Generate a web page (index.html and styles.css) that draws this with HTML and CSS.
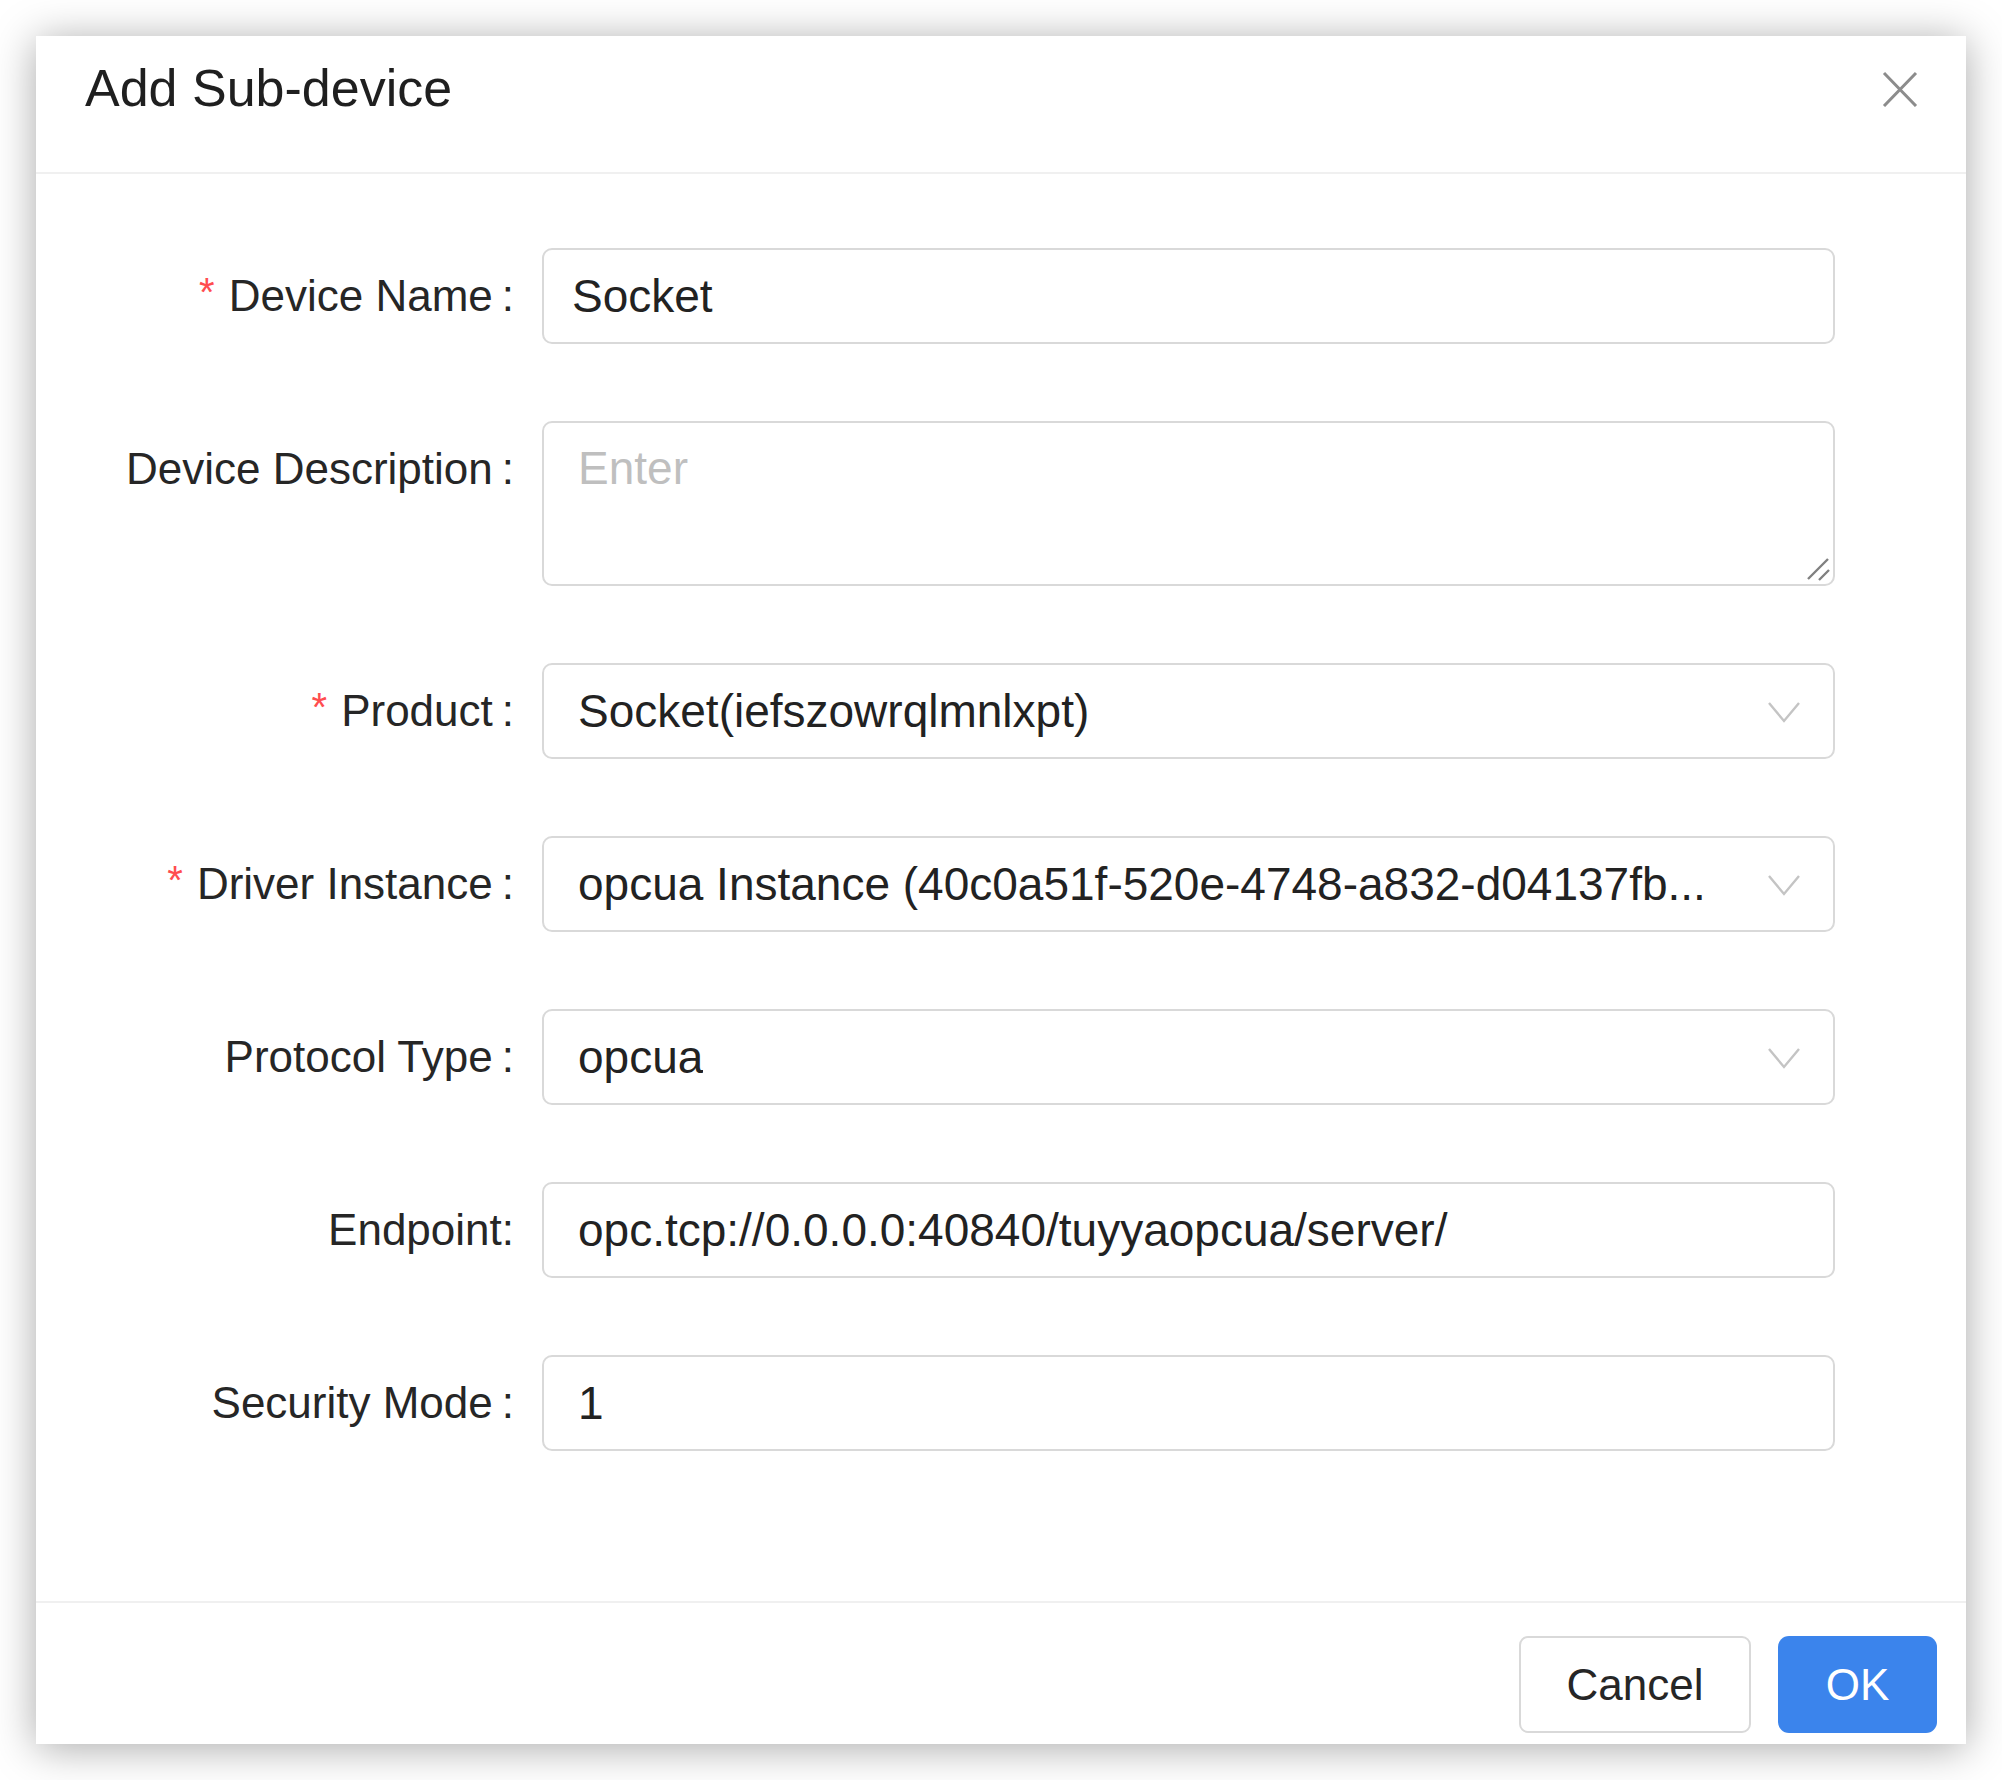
FILE: index.html
```html
<!DOCTYPE html>
<html lang="en">
<head>
<meta charset="utf-8">
<title>Add Sub-device</title>
<link rel="stylesheet" href="styles.css">
</head>
<body>
<div class="modal">
  <div class="modal-header">
    <div class="modal-title">Add Sub-device</div>
    <button class="modal-close" type="button" aria-label="Close">
      <svg viewBox="0 0 36 36" width="36" height="36"><path d="M2 2 L34 35 M34 2 L2 35" stroke="#8c8c8c" stroke-width="3" fill="none"/></svg>
    </button>
  </div>
  <form class="modal-body">
    <div class="form-row">
      <label class="form-label"><span class="req">*</span>Device Name<span class="colon">:</span></label>
      <div class="control"><input class="field field-first" type="text" value="Socket"></div>
    </div>
    <div class="form-row">
      <label class="form-label">Device Description<span class="colon">:</span></label>
      <div class="control textarea-wrap">
        <textarea class="field field-area" placeholder="Enter"></textarea>
        <svg class="resizer" viewBox="0 0 24 24" width="24" height="24"><path d="M2 22 L22 2 M13 23 L23 13" stroke="#808080" stroke-width="2.4" fill="none"/></svg>
      </div>
    </div>
    <div class="form-row">
      <label class="form-label"><span class="req">*</span>Product<span class="colon">:</span></label>
      <div class="control">
        <div class="field select"><span class="select-value">Socket(iefszowrqlmnlxpt)</span>
          <svg class="chevron" viewBox="0 0 32 22" width="32" height="22"><path d="M1 2 L16 20 L31 2" stroke="#c4c4c4" stroke-width="2.4" fill="none"/></svg>
        </div>
      </div>
    </div>
    <div class="form-row">
      <label class="form-label"><span class="req">*</span>Driver Instance<span class="colon">:</span></label>
      <div class="control">
        <div class="field select"><span class="select-value">opcua Instance (40c0a51f-520e-4748-a832-d04137fb...</span>
          <svg class="chevron" viewBox="0 0 32 22" width="32" height="22"><path d="M1 2 L16 20 L31 2" stroke="#c4c4c4" stroke-width="2.4" fill="none"/></svg>
        </div>
      </div>
    </div>
    <div class="form-row">
      <label class="form-label">Protocol Type<span class="colon">:</span></label>
      <div class="control">
        <div class="field select"><span class="select-value">opcua</span>
          <svg class="chevron" viewBox="0 0 32 22" width="32" height="22"><path d="M1 2 L16 20 L31 2" stroke="#c4c4c4" stroke-width="2.4" fill="none"/></svg>
        </div>
      </div>
    </div>
    <div class="form-row">
      <label class="form-label">Endpoint:</label>
      <div class="control"><input class="field" type="text" value="opc.tcp://0.0.0.0:40840/tuyyaopcua/server/"></div>
    </div>
    <div class="form-row">
      <label class="form-label">Security Mode<span class="colon">:</span></label>
      <div class="control"><input class="field" type="text" value="1"></div>
    </div>
  </form>
  <div class="modal-footer">
    <button class="btn btn-default" type="button">Cancel</button>
    <button class="btn btn-primary" type="button">OK</button>
  </div>
</div>
</body>
</html>
```

FILE: styles.css
```css
* { box-sizing: border-box; }

html, body {
  margin: 0;
  padding: 0;
  background: #ffffff;
}

body {
  font-family: "Liberation Sans", Arial, sans-serif;
  color: #262626;
  width: 2002px;
  height: 1780px;
  overflow: hidden;
}

.modal {
  margin: 36px 0 0 36px;
  width: 1930px;
  height: 1708px;
  background: #ffffff;
  box-shadow: 0 4px 40px rgba(0, 0, 0, 0.34);
  display: flex;
  flex-direction: column;
}

.modal-header {
  height: 138px;
  border-bottom: 2px solid #f0f0f0;
  display: flex;
  justify-content: space-between;
  align-items: flex-start;
  padding: 22px 48px 0 49px;
}

.modal-title {
  font-size: 52px;
  line-height: 60px;
  color: #1f1f1f;
}

.modal-close {
  margin-top: 13px;
  padding: 0;
  border: 0;
  background: transparent;
  width: 36px;
  height: 37px;
  display: flex;
}

.modal-body {
  flex: 1;
  margin: 0;
  padding-top: 74px;
  display: flex;
  flex-direction: column;
  gap: 77px;
}

.form-row {
  display: grid;
  grid-template-columns: 506px 1293px;
  align-items: start;
}

.form-label {
  height: 96px;
  display: flex;
  align-items: center;
  justify-content: flex-end;
  padding-right: 28px;
  font-size: 44px;
  color: #262626;
  white-space: nowrap;
}

.req {
  color: #ff4d4f;
  font-size: 40px;
  margin-right: 14px;
  align-self: center;
  position: relative;
  top: -4px;
}

.colon {
  margin-left: 9px;
}

.control {
  position: relative;
}

.field {
  display: block;
  width: 100%;
  height: 96px;
  margin: 0;
  border: 2px solid #d9d9d9;
  border-radius: 10px;
  background: #ffffff;
  padding: 0 34px;
  font-family: "Liberation Sans", Arial, sans-serif;
  font-size: 46px;
  color: #222222;
  outline: none;
}

.field-first {
  padding-left: 28px;
}

.field-area {
  height: 165px;
  resize: none;
  padding-top: 18px;
  line-height: 54px;
}

.field-area::placeholder {
  color: #bfbfbf;
}

.resizer {
  position: absolute;
  right: 5px;
  bottom: 5px;
}

.select {
  display: flex;
  align-items: center;
  justify-content: space-between;
  padding-right: 33px;
}

.select-value {
  white-space: nowrap;
  overflow: hidden;
}

.chevron {
  flex: none;
  margin-top: 2px;
}

.modal-footer {
  border-top: 2px solid #f0f0f0;
  padding: 33px 29px 0 0;
  height: 143px;
  display: flex;
  justify-content: flex-end;
  align-items: flex-start;
  gap: 27px;
}

.btn {
  height: 97px;
  margin: 0;
  font-family: "Liberation Sans", Arial, sans-serif;
  font-size: 44px;
  cursor: pointer;
}

.btn-default {
  width: 232px;
  background: #ffffff;
  border: 2px solid #d9d9d9;
  border-radius: 9px;
  color: #262626;
}

.btn-primary {
  width: 159px;
  background: #3b84ec;
  border: 0;
  border-radius: 11px;
  color: #ffffff;
}
```
